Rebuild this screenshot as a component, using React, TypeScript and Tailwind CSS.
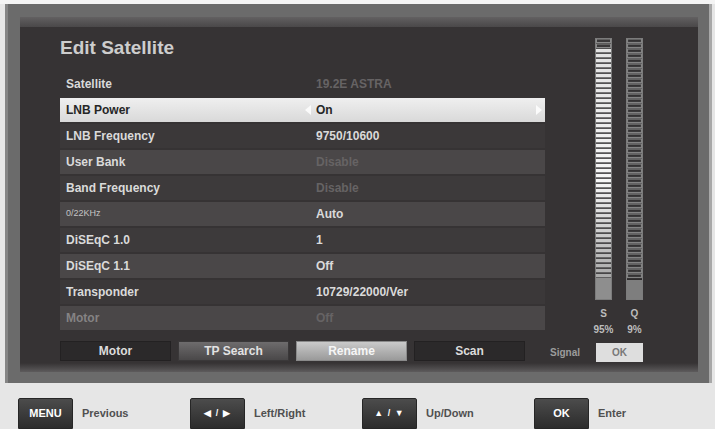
import React from "react";

type Row = { label: string; value: string; dimLabel?: boolean; dimValue?: boolean; small?: boolean };

const rows: Row[] = [
  { label: "Satellite", value: "19.2E ASTRA", dimValue: true },
  { label: "LNB Power", value: "On" },
  { label: "LNB Frequency", value: "9750/10600" },
  { label: "User Bank", value: "Disable", dimValue: true },
  { label: "Band Frequency", value: "Disable", dimValue: true },
  { label: "0/22KHz", value: "Auto", small: true },
  { label: "DiSEqC 1.0", value: "1" },
  { label: "DiSEqC 1.1", value: "Off" },
  { label: "Transponder", value: "10729/22000/Ver" },
  { label: "Motor", value: "Off", dimLabel: true, dimValue: true },
];

const rowBg = [
  "bg-transparent",
  "bg-gradient-to-b from-[#efefef] to-[#d9d9d9]",
  "bg-[#3b3839]",
  "bg-[#4a4748]",
  "bg-[#3d3a3b]",
  "bg-[#4a4748]",
  "bg-[#3d3a3b]",
  "bg-[#4a4748]",
  "bg-[#3b3839]",
  "bg-[#4a4748]",
];

function Arrow({ dir }: { dir: "left" | "right" }) {
  return (
    <svg width="6" height="10" viewBox="0 0 6 10">
      {dir === "left" ? (
        <polygon points="6,0 0,5 6,10" fill="#fbfbfb" />
      ) : (
        <polygon points="0,0 6,5 0,10" fill="#fbfbfb" />
      )}
    </svg>
  );
}

// Segmented level meter: 48 segments over a solid base block
function Meter({ kind }: { kind: "s" | "q" }) {
  const segs = Array.from({ length: 48 }, (_, i) => i);
  const shade = (i: number) => {
    let l = i < 28 ? 226 + (i - 2) * 0.8 : 247 - (i - 28) * 4;
    l = Math.max(150, Math.min(250, Math.round(l)));
    return `rgb(${l},${l},${l})`;
  };
  return (
    <svg width="17" height="262" viewBox="0 0 17 262">
      <rect x="0" y="0" width="17" height="262" fill="#2e2c2d" />
      {kind === "s"
        ? segs.map((i) =>
            i < 2 ? (
              <rect key={i} x="1.5" y={i * 5 + 1} width="14" height="3.5" fill="#3a3839" stroke="#8a8a8a" strokeWidth="1" />
            ) : (
              <rect key={i} x="1" y={i * 5 + 0.8} width="15" height="3.6" fill={shade(i)} />
            )
          )
        : segs.map((i) => (
            <rect key={i} x="1.5" y={i * 5 + 1} width="14" height="3.5" fill="#343233" stroke="#838383" strokeWidth="1.2" />
          ))}
      <rect x="0.5" y="0.5" width="16" height="261" fill="none" stroke="#7c7c7c" strokeWidth="1" />
      <rect x="1" y={kind === "s" ? 240 : 242} width="15" height={kind === "s" ? 21 : 19} fill={kind === "s" ? "#8e8e8e" : "#7e7e7e"} />
    </svg>
  );
}

function FooterKey({ keyLabel, text }: { keyLabel: React.ReactNode; text: string }) {
  return (
    <div className="w-[172px] flex items-center shrink-0">
      <div className="w-[55px] h-[31px] rounded-t-[2px] bg-gradient-to-b from-[#4c4c4c] to-[#2c2c2c] border border-[#262626] flex items-center justify-center text-white text-[11px] font-bold">
        {keyLabel}
      </div>
      <span className="ml-[9px] text-[11px] font-bold text-[#505050]">{text}</span>
    </div>
  );
}

export default function App() {
  return (
    <div className="w-[715px] h-[429px] overflow-hidden bg-[#e6e6e6] font-['Liberation_Sans',Arial,sans-serif]">
      <div className="h-[4px] bg-[#f4f4f4]" />
      {/* bezel */}
      <div className="ml-[5px] mr-[3px] h-[379px] bg-[#6b6b6b] border-l-[3px] border-l-[#858585] border-r-[3px] border-r-[#a8a8a8] pt-[13px] pl-[12px] pr-[11px] pb-[11px]">
        <div className="h-full bg-[#363334] flex flex-col">
          <div className="h-[10px] bg-gradient-to-b from-[#626061] to-[#4a4849]" />
          <div className="flex-1 flex">
            {/* settings list */}
            <div className="w-[525px] pl-[40px] pt-[8px] flex flex-col">
              <div className="h-[26px] leading-[26px] text-[19px] font-bold text-[#cdcdcd]">Edit Satellite</div>
              <div className="mt-[11px] flex flex-col gap-[2px]">
                {rows.map((r, i) => {
                  const hi = i === 1;
                  return (
                    <div key={r.label} className={`h-[24px] flex items-center ${rowBg[i]}`}>
                      <div
                        className={`w-[245px] pl-[6px] ${r.small ? "text-[9px] font-normal" : "text-[12px] font-bold"} ${
                          hi ? "text-[#262626]" : r.dimLabel ? "text-[#858384]" : r.small ? "text-[#c4c4c4]" : "text-[#dadada]"
                        }`}
                      >
                        {r.label}
                      </div>
                      <div className="w-[11px] flex items-center">{hi && <Arrow dir="left" />}</div>
                      <div
                        className={`flex-1 text-[12px] font-bold ${
                          hi ? "text-[#262626]" : r.dimValue ? "text-[#666364]" : "text-[#dadada]"
                        }`}
                      >
                        {r.value}
                      </div>
                      <div className="w-[9px] flex items-center">{hi && <Arrow dir="right" />}</div>
                    </div>
                  );
                })}
              </div>
              <div className="mt-[11px] flex gap-[7px]">
                <div className="w-[111px] h-[20px] bg-[#2b292a] border border-[#232122] flex items-center justify-center text-[12px] font-bold text-[#dcdcdc]">
                  Motor
                </div>
                <div className="w-[111px] h-[20px] bg-gradient-to-b from-[#6e6c6d] to-[#4a4849] border border-[#3a3839] flex items-center justify-center text-[12px] font-bold text-[#e2e2e2]">
                  TP Search
                </div>
                <div className="w-[111px] h-[20px] bg-gradient-to-b from-[#cacaca] to-[#9a9a9a] border border-[#8a8a8a] flex items-center justify-center text-[12px] font-bold text-[#f6f6f6]">
                  Rename
                </div>
                <div className="w-[111px] h-[20px] bg-[#2b292a] border border-[#232122] flex items-center justify-center text-[12px] font-bold text-[#dcdcdc]">
                  Scan
                </div>
              </div>
            </div>
            {/* signal meters */}
            <div className="flex-1 pl-[5px] pt-[11px] flex flex-col">
              <div className="ml-[45px] flex gap-[14px]">
                <Meter kind="s" />
                <Meter kind="q" />
              </div>
              <div className="ml-[45px] mt-[6px] flex gap-[14px] h-[14px] text-[10px] font-bold text-[#bdbdbd]">
                <div className="w-[17px] flex justify-center">S</div>
                <div className="w-[17px] flex justify-center">Q</div>
              </div>
              <div className="ml-[45px] mt-[2px] flex gap-[14px] h-[14px] text-[10px] font-bold text-[#bdbdbd]">
                <div className="w-[17px] flex justify-center whitespace-nowrap">95%</div>
                <div className="w-[17px] flex justify-center whitespace-nowrap">9%</div>
              </div>
              <div className="mt-[7px] flex items-center">
                <span className="w-[46px] text-[10px] font-bold text-[#9c9c9c]">Signal</span>
                <div className="w-[47px] h-[19px] bg-[#dedede] flex items-center justify-center text-[10px] font-bold text-[#777]">
                  OK
                </div>
              </div>
            </div>
          </div>
          <div className="h-[9px] bg-gradient-to-b from-[#363334] to-[#5d5b5c]" />
        </div>
      </div>
      {/* key hints */}
      <div className="pt-[15px] pl-[18px] flex">
        <FooterKey keyLabel="MENU" text="Previous" />
        <FooterKey keyLabel={<span className="text-[9px] tracking-[1px]">◀ / ▶</span>} text="Left/Right" />
        <FooterKey keyLabel={<span className="text-[9px] tracking-[1px]">▲ / ▼</span>} text="Up/Down" />
        <FooterKey keyLabel="OK" text="Enter" />
      </div>
    </div>
  );
}
